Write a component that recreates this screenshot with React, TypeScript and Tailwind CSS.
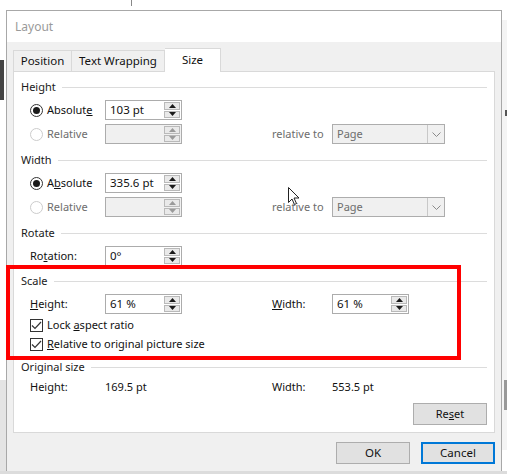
import React from 'react';

const FONT = { fontFamily: '"Noto Sans", "Open Sans", sans-serif' };

function Arrow({ down, dim }: { down?: boolean; dim?: boolean }) {
  return (
    <svg width="7" height="4" viewBox="0 0 7 4">
      <path d={down ? 'M0 0 L7 0 L3.5 4Z' : 'M0 4 L7 4 L3.5 0Z'} fill={dim ? '#9a9a9a' : '#1a1a1a'} />
    </svg>
  );
}

function Spin({ value, disabled }: { value?: string; disabled?: boolean }) {
  return (
    <div
      className={`flex h-[20px] w-[77px] border border-[#acacac] ${disabled ? 'bg-[#f0f0f0]' : 'bg-white'}`}
    >
      <div className="flex-1 pl-[4px] text-[11.5px] leading-[18px] text-[#111]">{value}</div>
      <div className="flex w-[17px] flex-col gap-px p-px pl-0">
        <div className="flex flex-1 items-center justify-center border border-[#b9b9b9] bg-[#e9e9e9]">
          <Arrow dim={disabled} />
        </div>
        <div className="flex flex-1 items-center justify-center border border-[#b9b9b9] bg-[#e9e9e9]">
          <Arrow down dim={disabled} />
        </div>
      </div>
    </div>
  );
}

function Dropdown() {
  return (
    <div className="flex h-[20px] w-[113px] border border-[#adadad] bg-[#f0f0f0] text-[#6d6d6d]">
      <div className="flex-1 pl-[4px] leading-[18px]">Page</div>
      <div className="flex w-[17px] items-center justify-center border-l border-[#c8c8c8]">
        <svg width="9" height="5" viewBox="0 0 9 5">
          <path d="M0.5 0.5 L4.5 4.5 L8.5 0.5" fill="none" stroke="#8a8a8a" strokeWidth="1" />
        </svg>
      </div>
    </div>
  );
}

function Radio({ checked, disabled }: { checked?: boolean; disabled?: boolean }) {
  return (
    <div
      className={`flex h-[13px] w-[13px] items-center justify-center rounded-full border bg-white ${disabled ? 'border-[#cccccc]' : 'border-[#333333]'}`}
    >
      {checked && <div className="h-[7px] w-[7px] rounded-full bg-[#1a1a1a]" />}
    </div>
  );
}

function Check() {
  return (
    <div className="flex h-[13px] w-[13px] items-center justify-center border border-[#333333] bg-white">
      <svg width="11" height="9" viewBox="0 0 11 9">
        <path d="M1 4.5 L4 7.5 L10 1" fill="none" stroke="#333" strokeWidth="1.2" />
      </svg>
    </div>
  );
}

function Section({ title, mt }: { title: string; mt: string }) {
  return (
    <div className={`flex h-[16px] items-center pl-[7px] pr-[7px] ${mt}`}>
      <span className="text-[#1a1a1a]">{title}</span>
      <div className="ml-[6px] h-px flex-1 bg-[#dcdcdc]" />
    </div>
  );
}

export default function App() {
  return (
    <div className="relative h-[474px] w-[507px] overflow-hidden bg-white text-[11px]" style={FONT}>
      {/* document behind the dialog */}
      <div className="absolute left-0 top-[60px] h-[40px] w-[4px] bg-[#444]" />
      <div className="absolute left-[131px] top-0 h-[6px] w-px bg-[#888]" />
      <div className="absolute left-0 top-[380px] h-[94px] w-[6px] bg-[#e4e4e4]" />
      <div className="absolute right-0 top-[20px] h-[430px] w-[5px] bg-[#f4f4f4]" />
      <div className="absolute right-0 top-[110px] h-[6px] w-[2px] bg-[#555]" />
      <div className="absolute right-0 top-[380px] h-[30px] w-[3px] bg-[#999]" />
      <div className="absolute bottom-0 left-0 h-[3px] w-full bg-[#dcdcdc]" />

      <div className="ml-[6px] mt-[10px] flex h-[462px] w-[496px] flex-col border border-[#a8a8a8] bg-[#f0f0f0]">
        <div className="flex h-[31px] items-center bg-white pl-[8px] text-[12px] text-[#9a9a9a]">Layout</div>

        <div className="pl-[6px] pr-[6px] pt-[6px]">
          <div className="flex h-[23px] items-end text-[11.5px]">
            <div className="flex h-[21px] w-[59px] items-center justify-center border border-b-0 border-[#d9d9d9] text-[#111]">
              Position
            </div>
            <div className="flex h-[21px] w-[93px] items-center justify-center border border-b-0 border-l-0 border-[#d9d9d9] text-[#111]">
              Text Wrapping
            </div>
            <div className="relative z-10 -mb-px flex h-[24px] w-[56px] items-center justify-center border border-b-0 border-l-0 border-[#d9d9d9] bg-white pb-[2px] text-[#111]">
              Size
            </div>
          </div>

          <div className="flex h-[362px] flex-col border border-[#d9d9d9] bg-white text-[#111]">
            <Section title="Height" mt="mt-[7px]" />
            <div className="mt-[5px] flex h-[20px] items-center pl-[16px]">
              <div className="flex w-[75px] items-center gap-[4px]">
                <Radio checked />
                <span>
                  Absolut<u>e</u>
                </span>
              </div>
              <Spin value="103 pt" />
            </div>
            <div className="mt-[4px] flex h-[20px] items-center pl-[16px]">
              <div className="flex w-[75px] items-center gap-[4px] text-[#6d6d6d]">
                <Radio disabled />
                <span>Relative</span>
              </div>
              <Spin disabled />
              <span className="ml-[90px] w-[60px] text-[#6d6d6d]">relative to</span>
              <Dropdown />
            </div>

            <Section title="Width" mt="mt-[8px]" />
            <div className="mt-[5px] flex h-[20px] items-center pl-[16px]">
              <div className="flex w-[75px] items-center gap-[4px]">
                <Radio checked />
                <span>
                  A<u>b</u>solute
                </span>
              </div>
              <Spin value="335.6 pt" />
            </div>
            <div className="mt-[4px] flex h-[20px] items-center pl-[16px]">
              <div className="flex w-[75px] items-center gap-[4px] text-[#6d6d6d]">
                <Radio disabled />
                <span>Relative</span>
              </div>
              <Spin disabled />
              <span className="ml-[90px] w-[60px] text-[#6d6d6d]">relative to</span>
              <Dropdown />
            </div>

            <Section title="Rotate" mt="mt-[8px]" />
            <div className="mt-[5px] flex h-[20px] items-center pl-[16px]">
              <span className="w-[75px]">
                Ro<u>t</u>ation:
              </span>
              <Spin value="0°" />
            </div>

            <Section title="Scale" mt="mt-[7px]" />
            <div className="mt-[5px] flex h-[20px] items-center pl-[16px]">
              <span className="w-[75px]">
                <u>H</u>eight:
              </span>
              <Spin value="61 %" />
              <span className="ml-[90px] w-[60px]">
                <u>W</u>idth:
              </span>
              <Spin value="61 %" />
            </div>
            <div className="mt-[3px] flex h-[16px] items-center gap-[4px] pl-[16px]">
              <Check />
              <span>
                Lock <u>a</u>spect ratio
              </span>
            </div>
            <div className="mt-[3px] flex h-[16px] items-center gap-[4px] pl-[16px]">
              <Check />
              <span>
                <u>R</u>elative to original picture size
              </span>
            </div>

            <Section title="Original size" mt="mt-[7px]" />
            <div className="mt-[4px] flex h-[16px] items-center pl-[16px]">
              <span className="w-[75px]">Height:</span>
              <span className="w-[77px]">169.5 pt</span>
              <span className="ml-[90px] w-[60px]">Width:</span>
              <span>553.5 pt</span>
            </div>

            <div className="mt-[8px] flex justify-end pr-[7px]">
              <button className="h-[22px] w-[74px] border border-[#adadad] bg-[#e1e1e1] text-[#111]">
                Re<u>s</u>et
              </button>
            </div>
          </div>

          <div className="mt-[9px] flex justify-end gap-[11px] text-[11.5px]">
            <button className="h-[22px] w-[74px] border border-[#adadad] bg-[#e1e1e1] text-[#111]">OK</button>
            <button className="h-[22px] w-[74px] border-2 border-[#0078d7] bg-[#e1e1e1] text-[#111]">Cancel</button>
          </div>
        </div>
      </div>

      {/* red highlight drawn over the Scale group */}
      <div className="absolute left-[6px] top-[265px] h-[95px] w-[455px] border-4 border-[#ff0000]" />

      {/* mouse pointer */}
      <svg className="absolute left-[288px] top-[187px]" width="12" height="19" viewBox="0 0 12 19">
        <path d="M0.5 0.5 L0.5 15.5 L4 12 L6.5 17.5 L8.5 16.5 L6 11 L11 11 Z" fill="#fff" stroke="#222" strokeWidth="1" />
      </svg>
    </div>
  );
}
